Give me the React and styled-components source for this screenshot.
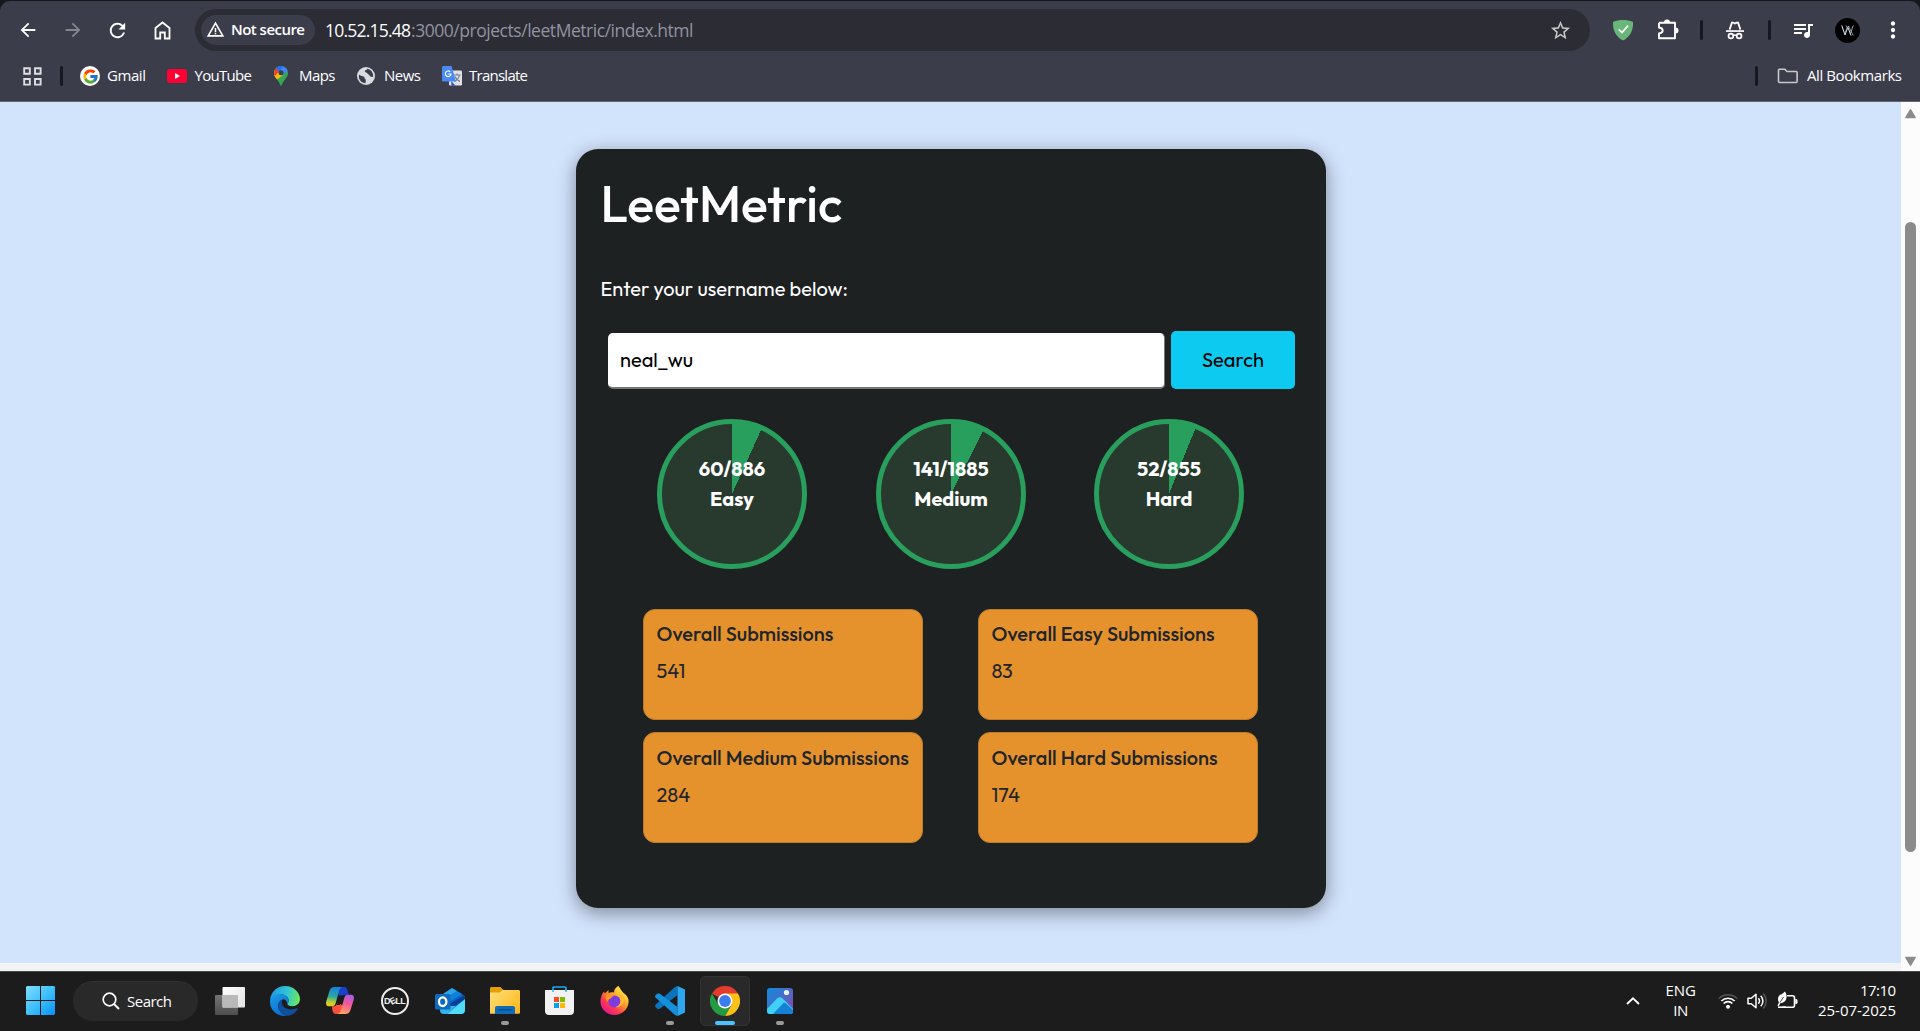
import React, { useLayoutEffect, useRef, useState } from "react";
import styled, { createGlobalStyle } from "styled-components";
import {
  MdArrowBack, MdArrowForward, MdRefresh, MdWarningAmber,
  MdStarBorder, MdQueueMusic, MdMoreVert,
} from "react-icons/md";
import { FcGoogle } from "react-icons/fc";

const UI = `"Segoe UI", "Open Sans", "Noto Sans", sans-serif`;
const PAGE = `Outfit, Lato, "Open Sans", sans-serif`;

const GlobalStyle = createGlobalStyle`
  *, *::before, *::after { box-sizing: border-box; }
  body { margin: 0; background: #16171d; overflow: hidden; }
  h1, p, h4 { margin: 0; }
`;

const Screen = styled.div`
  display: flex;
  flex-direction: column;
  width: 1920px;
  height: 1031px;
  overflow: hidden;
`;

const FitBox = styled.span`
  display: inline-block;
  white-space: nowrap;
`;

/* Tracks the text so that it spans the given width whatever font is installed. */
function Fit({ w, children }) {
  const ref = useRef(null);
  const [spacing, setSpacing] = useState(0);
  useLayoutEffect(() => {
    const natural = ref.current.getBoundingClientRect().width;
    setSpacing((w - natural) / (String(children).length - 1));
  }, [w, children]);
  return (
    <FitBox ref={ref} style={{ letterSpacing: spacing, marginRight: -spacing }}>
      {children}
    </FitBox>
  );
}

/* ---------- browser chrome ---------- */

const Chrome = styled.header`
  flex: none;
  height: 102px;
  padding-top: 1px;
  font-family: ${UI};
  color: #fff;
`;

const ChromeBody = styled.div`
  height: 101px;
  padding-top: 8px;
  background: #3c3d4b;
  border-radius: 10px 10px 0 0;
  border-bottom: 1px solid #64656f;
`;

const Toolbar = styled.div`
  display: flex;
  align-items: center;
  height: 42px;
  padding-left: 5px;
`;

const Slot = styled.div`
  flex: none;
  width: ${(p) => p.$w || 45}px;
  display: flex;
  align-items: center;
  justify-content: center;
  color: ${(p) => (p.$dim ? "#85868f" : "#fff")};
`;

const AddressBar = styled.div`
  flex: none;
  width: 1395px;
  height: 42px;
  margin: 0 10px;
  padding: 0 18px 0 6px;
  border-radius: 21px;
  background: #2b2c34;
  display: flex;
  align-items: center;
`;

const SecurityChip = styled.div`
  display: flex;
  align-items: center;
  gap: 6px;
  width: 114px;
  height: 30px;
  padding: 0 0 2px 5px;
  border-radius: 15px;
  background: #3c3d4b;
  font-size: 15px;
  font-weight: 600;
  line-height: 20px;
`;

const Url = styled.div`
  flex: 1;
  margin-left: 10px;
  font-size: 17.5px;
  line-height: 24px;
  color: #9293a0;
`;

const Host = styled.span`
  color: #fff;
`;

const Divider = styled.div`
  width: 3px;
  height: 20px;
  border-radius: 2px;
  background: #17181f;
`;

const Avatar = styled.div`
  width: 25px;
  height: 25px;
  border-radius: 50%;
  background: #000;
  display: grid;
  place-items: center;
`;

const Bookmarks = styled.nav`
  display: flex;
  align-items: center;
  height: 50px;
  padding: 0 18px 0 23px;
  font-size: 15px;
  line-height: 20px;
`;

const Bookmark = styled.div`
  display: flex;
  align-items: center;
  gap: ${(p) => p.$gap}px;
  margin-left: ${(p) => p.$ml}px;
`;

const BookmarkName = styled.div`
  height: 22px;
`;

const BarStart = styled.div`
  display: flex;
  align-items: center;
  gap: 17.500px;
`;

const BarEnd = styled.div`
  display: flex;
  align-items: center;
  margin-left: auto;
`;

/* ---------- page ---------- */

const Viewport = styled.div`
  display: flex;
  flex: none;
  height: 869px;
`;

const PageColumn = styled.div`
  width: 1901px;
  background: #f1f3f4;
`;

const Page = styled.main`
  height: 861px;
  padding-top: 47px;
  background: #d2e3fc;
  font-family: ${PAGE};
`;

const Scrollbar = styled.div`
  width: 19px;
  background: #fcfcfc;
  display: flex;
  flex-direction: column;
  align-items: center;
  padding-top: 6px;
`;

const Thumb = styled.div`
  flex: none;
  width: 11px;
  height: 630px;
  margin: 103px 1px 104px 0;
  border-radius: 6px;
  background: #8b8b8b;
`;

const Card = styled.section`
  width: 750px;
  height: 759px;
  margin: 0 auto;
  padding: 25px 25px;
  border-radius: 22px;
  background: #1e2122;
  box-shadow: 0 5px 19px rgba(0, 0, 0, 0.4);
  color: #fff;
`;

const Title = styled.h1`
  font-size: 50px;
  font-weight: 500;
  line-height: 60px;
`;

const Hint = styled.p`
  margin-top: 40px;
  font-size: 20px;
  line-height: 30px;
`;

const SearchRow = styled.div`
  display: flex;
  align-items: flex-end;
  gap: 6px;
  margin-top: 27px;
  padding-left: 7px;
  height: 58px;
  font-size: 20px;
  line-height: 30px;
  color: #000;
`;

const Field = styled.div`
  display: flex;
  align-items: center;
  width: 557px;
  height: 56px;
  padding: 0 12.500px 1px;
  border-radius: 5px;
  background: #fff;
  border-right: 1px solid #767676;
  border-bottom: 2px solid #767676;
`;

const SearchButton = styled.button`
  width: 124px;
  height: 58px;
  padding: 0 0 0 1px;
  border: 0;
  border-radius: 5px;
  background: #0dcaf0;
  color: #000;
  font: inherit;
`;

const Rings = styled.div`
  display: grid;
  grid-template-columns: 219px 218px 150px;
  margin: 30px 0 0 56px;
`;

const Ring = styled.div`
  width: 150px;
  height: 150px;
  padding: 30px 0 0 1px;
  border: 5px solid #299f5d;
  border-radius: 50%;
  background: conic-gradient(#299f5d ${(p) => p.$pct}%, #283a2e 0) border-box;
  text-align: center;
  font-size: 20px;
  font-weight: 700;
  line-height: 30px;
`;

const Stats = styled.div`
  display: grid;
  grid-template-columns: 280px 280px;
  gap: 12.400px 55px;
  margin: 40px 0 0 42px;
`;

const Stat = styled.div`
  height: 111px;
  padding: 9px 13px;
  border: 1px solid #bd7c2b;
  border-radius: 12px;
  background: #e5922d;
  color: #212529;
  font-size: 20px;
  line-height: 30px;
  white-space: nowrap;

  &:nth-child(n + 3) {
    padding-top: 10px;
  }
`;

const StatName = styled.h4`
  font-size: inherit;
  font-weight: 500;
`;

const StatValue = styled.p`
  margin-top: 7px;
`;

/* ---------- taskbar ---------- */

const Taskbar = styled.footer`
  display: flex;
  align-items: center;
  flex: none;
  height: 60px;
  padding: 0 24px 2px 26px;
  border-top: 1px solid #48494b;
  background: #1c1c1c;
  color: #fff;
  font-family: ${UI};
  font-size: 15px;
  line-height: 20px;
`;

const SearchPill = styled.div`
  display: flex;
  align-items: center;
  gap: 7px;
  width: 125px;
  height: 40px;
  margin: 0 4px 0 18px;
  padding-left: 29px;
  border-radius: 20px;
  background: #292929;
  border-top: 1px solid #323232;
`;

const AppButton = styled.div`
  position: relative;
  width: 55px;
  height: 50px;
  display: grid;
  place-items: center;
`;

const ActiveTile = styled.div`
  width: 50px;
  height: 50px;
  border: 1px solid #333;
  border-radius: 5px;
  background: #292929;
  display: grid;
  place-items: center;
`;

const Indicator = styled.div`
  position: absolute;
  left: 50%;
  bottom: 1px;
  width: ${(p) => (p.$active ? 20 : 8)}px;
  height: 4px;
  border-radius: 2px;
  background: ${(p) => (p.$active ? "#4cc2ff" : "#9a9a9a")};
  transform: translateX(-50%);
`;

const Tray = styled.div`
  display: flex;
  align-items: center;
  margin-left: auto;
`;

const Language = styled.div`
  display: flex;
  flex-direction: column;
  align-items: center;
  margin: -1px 22px 0 26px;
`;

const Status = styled.div`
  display: flex;
  align-items: center;
  gap: 9px;
`;

const Clock = styled.div`
  display: flex;
  flex-direction: column;
  align-items: flex-end;
  margin: -2px 0 0 20px;
`;

/* ---------- drawings ---------- */

const Block = styled.svg`
  display: block;
  flex: none;
`;
const Svg = ({ w, h = w, box, children, ...rest }) => (
  <Block width={w} height={h} viewBox={box || `0 0 ${w} ${h}`} fill="none" {...rest}>{children}</Block>
);

const Home = () => (
  <Svg w={17} h={19} stroke="#fff" strokeWidth="1.800">
    <path d="M1.500 7L8.500 1.500l7 5.500v10.500h-4.700v-6H6.200v6H1.500z" />
  </Svg>
);
const Shield = () => (
  <Svg w={22} h={22}>
    <path d="M1 3C4 1.6 7.5 1 11 1s7 .6 10 2c.4 8-2.500 14.500-10 18.500C3.500 17.500.6 11 1 3z" fill="#68b678" />
    <path d="M6.800 10.300l3.200 3.300 6-7" stroke="#fff" strokeWidth="1.700" />
  </Svg>
);
const Puzzle = () => (
  <Svg w={22} h={22}>
    <path d="M2 3.800h16v6.400M18 12.500v6.700H2v-4.700c3-.5 3.700-1.700 3.700-3S5 9 2 8.500V3.800M18 3.800V19.200" stroke="#fff" strokeWidth="1.900" strokeLinejoin="round" />
    <path d="M7 3.500a3 3 0 0 1 6 0zM18.500 8.500a3 3 0 0 1 0 6z" fill="#fff" />
  </Svg>
);
const Incognito = () => (
  <Svg w={20} h={20}>
    <path d="M1 10.200h18v1.700H1z" fill="#fff" />
    <path d="M4.600 9.600L6.900 2.700h1.500l1.600.8 1.600-.8h1.500l2.300 6.900" stroke="#fff" strokeWidth="1.800" fill="none" />
    <circle cx="5.900" cy="16" r="2.400" stroke="#fff" strokeWidth="1.700" fill="none" />
    <circle cx="14.100" cy="16" r="2.400" stroke="#fff" strokeWidth="1.700" fill="none" />
    <path d="M8 15.600q2-1.300 4 0" stroke="#fff" strokeWidth="1.400" fill="none" />
  </Svg>
);
const AvatarMark = () => (
  <Svg w={13} h={13}>
    <path d="M.8 1.500l3.200 9.500L6.800 3.200 10 11.500" stroke="#e3e8ec" strokeWidth="1" />
    <path d="M5.200 1.500l1.600 4M3.500 9.500L7.500 2l4.700 9.500M9.500 9l2.800-7.500" stroke="#9fb0c0" strokeWidth=".9" />
  </Svg>
);
const AppsGrid = () => (
  <Svg w={19} h={19} stroke="#dedee3" strokeWidth="1.900">
    <path d="M1.200 1.200h5.600v5.600H1.200zM12 1.200h5.600v5.600H12zM1.200 12h5.600v5.600H1.200zM12 12h5.600v5.600H12z" />
  </Svg>
);
const Google = styled.div`
  width: 20px;
  height: 20px;
  border-radius: 50%;
  background: #fff;
  display: grid;
  place-items: center;
`;
const YouTube = () => (
  <Svg w={20} h={14}>
    <rect width="20" height="14" rx="3.200" fill="#ff0033" />
    <path d="M8 4v6l5-3z" fill="#fff" />
  </Svg>
);
const MapsPin = () => (
  <Svg w={14} h={20}>
    <defs><clipPath id="pin"><path d="M7 0a7 7 0 0 1 7 7c0 3-1.500 4.500-3.600 7.200C8.600 16.700 8 18 7.600 19.300c-.2.900-1 .9-1.200 0C6 18 5.400 16.700 3.600 14.200 1.500 11.500 0 10 0 7a7 7 0 0 1 7-7z" /></clipPath></defs>
    <g clipPath="url(#pin)">
      <path d="M0 0h14v20H0z" fill="#34a853" />
      <path d="M0 4l4 1 5 4-6.500 5L0 13z" fill="#fbbc04" />
      <path d="M0 0h5l2 3-5.500 6.500L0 9z" fill="#ea4335" />
      <path d="M2 1.800L4 0h10v4.500L9.500 9 7 4 4.800 5.200z" fill="#4285f4" />
      <path d="M2 1.800L5 0h5l-5.200 5.200z" fill="#1a73e8" />
    </g>
    <circle cx="7" cy="6.800" r="2.500" fill="#3c3d4b" />
  </Svg>
);
const Globe = () => (
  <Svg w={18} h={18}>
    <circle cx="9" cy="9" r="9" fill="#dadce0" />
    <path d="M2 7.500c1 1.200 3 1.500 4.600 2 1.500.6.400 1.800 1.700 2.500 1 .7.200 2.600.2 4.200C4.500 16 1.800 13 1.800 9zM10.500 1.800c-.7 1.500-2.500 1-2.700 2.800-.1 1.200 1.600.5 2.200 1.500.6 1.300 2 1.200 2.500 2.400.3.900 2 1.600 3.600 1.400.5-4-2-7.300-5.600-8.100z" fill="#3c3d4b" />
  </Svg>
);
const Translate = () => (
  <Svg w={20} h={20}>
    <rect x="7" y="4.500" width="13" height="15" rx="1.200" fill="#dfe1e5" />
    <path d="M9 15l4.500 4.500L9.500 20z" fill="#3b4ed8" />
    <path d="M11.500 9h7M15 7.500V9M17.500 9c-.5 3-2.500 5-5 6.500M13 10.500c.8 2 2.800 4 5 5" stroke="#6b7f87" strokeWidth="1.100" />
    <path d="M1.300 0h8.200L14 15.500H1.300A1.300 1.300 0 0 1 0 14.200V1.300C0 .6.600 0 1.300 0z" fill="#4a8af4" />
    <path d="M8.200 5.800A2.800 2.800 0 1 0 9 8H6.300" stroke="#fff" strokeWidth="1.200" />
  </Svg>
);
const Folder = () => (
  <Svg w={22} h={16}>
    <path d="M2.500 1.200h5.300l2.300 2.300h9c.6 0 1 .5 1 1v9c0 .6-.4 1-1 1H2.500c-.6 0-1-.4-1-1V2.200c0-.6.4-1 1-1z" stroke="#c9c9cd" strokeWidth="1.600" />
  </Svg>
);
const Arrow = ({ down }) => (
  <Svg w={13} h={11}>
    <path d={down ? "M2 1.500h9L6.500 9z" : "M2 9.500h9L6.500 2z"} fill="#8b8b8b" stroke="#8b8b8b" strokeWidth="1.600" strokeLinejoin="round" />
  </Svg>
);

const Windows = () => (
  <Svg w={29}>
    <defs><linearGradient id="win" x1="0" y1="0" x2="29" y2="29" gradientUnits="userSpaceOnUse"><stop stopColor="#7fdcff" /><stop offset=".5" stopColor="#3fc1fb" /><stop offset="1" stopColor="#0a8ff5" /></linearGradient></defs>
    <path d="M1 0h13v14H0V1zM15 0h13l1 1v13H15zM0 15h14v14H1l-1-1zM15 15h14v13l-1 1H15z" fill="url(#win)" />
  </Svg>
);
const Magnifier = () => (
  <Svg w={18}>
    <circle cx="7.500" cy="7.500" r="6.300" stroke="#fff" strokeWidth="1.700" />
    <path d="M12 12l5 5" stroke="#fff" strokeWidth="2" />
  </Svg>
);
const TaskView = () => (
  <Svg w={30} h={28}>
    <defs>
      <linearGradient id="tv1" x1="8" y1="0" x2="30" y2="20" gradientUnits="userSpaceOnUse"><stop stopColor="#fff" /><stop offset="1" stopColor="#e2e2e2" /></linearGradient>
      <linearGradient id="tv2" x1="0" y1="8" x2="0" y2="28" gradientUnits="userSpaceOnUse"><stop stopColor="#747474" /><stop offset="1" stopColor="#4e4e4e" /></linearGradient>
    </defs>
    <rect x="0" y="8" width="23" height="20" rx="1" fill="url(#tv2)" />
    <rect x="7.500" y="0" width="22.500" height="20.500" rx="1" fill="url(#tv1)" />
    <path d="M7.500 8H23v12.500H7.500z" fill="#b9b9b9" />
  </Svg>
);
const Edge = () => (
  <Svg w={30}>
    <defs>
      <linearGradient id="ed1" x1="2" y1="8" x2="30" y2="14" gradientUnits="userSpaceOnUse"><stop stopColor="#209fe0" /><stop offset=".5" stopColor="#2fc4d4" /><stop offset="1" stopColor="#6fec52" /></linearGradient>
      <linearGradient id="ed2" x1="0" y1="10" x2="12" y2="30" gradientUnits="userSpaceOnUse"><stop stopColor="#1a9be6" /><stop offset="1" stopColor="#0b6cd0" /></linearGradient>
    </defs>
    <path d="M15 0c8.500 0 15 6.300 15 13 0 4.500-3.600 7.200-7.400 7.200-3.300 0-5.200-1-5.200-2.200 0-.9 1.300-1.400 1.300-3.500 0-3.500-3.400-6-7.800-6C5.500 8.500 1.300 11.600.1 14 .8 6 7 0 15 0z" fill="url(#ed1)" />
    <path d="M.1 14C1.300 10 5.500 8 9.800 8c4.600 0 9 2.800 9 6.500 0 2.100-1.300 2.600-1.300 3.500-.6-3.500-3-5-5-4.600C8 15 7 20 9.500 24.500c2 3.300 5 5 7.500 5.300C7 30.800-1 23.500.1 14z" fill="url(#ed2)" />
    <path d="M12.500 13.400C8 15 7 20 9.500 24.500c2 3.500 5.500 5.300 8.500 5.200 4-.5 8-3.300 9.700-6.700.3-.7-.2-1-.8-.7-6 2.700-14.200.5-15-4.800-.2-1.700 0-3 .6-4.100z" fill="#0f4f9e" />
  </Svg>
);
const Copilot = () => (
  <Svg w={28} h={27}>
    <defs>
      <linearGradient id="co1" x1="8" y1="0" x2="5" y2="19" gradientUnits="userSpaceOnUse"><stop stopColor="#1583e0" /><stop offset=".5" stopColor="#2aa7a0" /><stop offset=".8" stopColor="#b9cf32" /><stop offset="1" stopColor="#f4c918" /></linearGradient>
      <linearGradient id="co2" x1="24" y1="7" x2="17" y2="27" gradientUnits="userSpaceOnUse"><stop stopColor="#a55cf0" /><stop offset=".5" stopColor="#f05a94" /><stop offset="1" stopColor="#ffa560" /></linearGradient>
    </defs>
    <path d="M14 0h4.500c1.700 0 2.400 1 3 3l1.300 5H18c-2 0-3 1-3.600 3L11 4z" fill="#1a3fc9" />
    <path d="M6 27h7c2 0 3-1.500 3.500-3.300L17 19l-5-4-1.500 3c-.7 1-1.500 1.300-3 1.300H6C6 22 6.500 27 10 27z" fill="#f9503d" />
    <path d="M8.500 0h8c-2 .3-2.800 2-3.400 4L9.700 16c-.7 2.200-1.500 3.300-3.700 3.300H3c-2.500 0-3.500-2-2.700-5L3.500 4C4.300 1.300 5.800 0 8.500 0z" fill="url(#co1)" />
    <path d="M19.500 27h-8c2-.3 2.800-2 3.400-4l3.400-12c.7-2.200 1.500-3.300 3.700-3.300h3c2.500 0 3.500 2 2.700 5L24.500 23c-.8 2.700-2.300 4-5 4z" fill="url(#co2)" />
    <path d="M13.500 8.500h3L13.800 18h-3z" fill="#1c1c1c" />
  </Svg>
);
const DellFace = styled.div`
  width: 28px;
  height: 28px;
  border: 2px solid #eee;
  border-radius: 50%;
  display: flex;
  align-items: center;
  justify-content: center;
  font: 700 9px/10px "Liberation Sans", sans-serif;
  letter-spacing: -0.6px;
  color: #f0f0f0;
`;
const DellE = styled.span`
  transform: rotate(-30deg);
`;
const Outlook = () => (
  <Svg w={30} h={26}>
    <path d="M17 0l12 7.500c.7.500 1 1 1 2V22c0 2.500-1.500 4-4 4H9c-2.500 0-4-1.500-4-4V8z" fill="#0a63c9" />
    <path d="M5 8L17 0l5 3L6 13z" fill="#2aa5ea" />
    <path d="M22 3l5 3L9 17l-4-3z" fill="#1180dc" />
    <path d="M29 7.500l1 2V12L14 21v-5z" fill="#073f94" />
    <path d="M30 11L12 26h14c2.500 0 4-1.500 4-4z" fill="#50dcf7" />
    <path d="M5 18l16 0L12 26H9c-2.500 0-4-1.500-4-4z" fill="#2fb4ee" />
    <rect y="6" width="15.500" height="15.500" rx="1.500" fill="#0f6cbd" />
    <ellipse cx="7.700" cy="13.700" rx="3.700" ry="4.300" stroke="#fff" strokeWidth="2.300" />
  </Svg>
);
const Explorer = () => (
  <Svg w={30} h={27}>
    <defs><linearGradient id="ex" x1="0" y1="3" x2="26" y2="27" gradientUnits="userSpaceOnUse"><stop stopColor="#ffe07a" /><stop offset="1" stopColor="#fdb81e" /></linearGradient></defs>
    <path d="M1 0h9.500l3 3H13v4H0V1z" fill="#e3a006" />
    <path d="M0 5.500h9.500L13 3h16l1 1v22l-1 .8H0z" fill="url(#ex)" />
    <path d="M5 27v-6c0-1.300.8-2 2-2h16c1.300 0 2 .8 2 2v6z" fill="#0f6cb8" />
    <path d="M8.500 22.800h13" stroke="#0a4a84" strokeWidth="1.300" />
  </Svg>
);
const Store = () => (
  <Svg w={29} h={29}>
    <path d="M8 6V2c0-.7.500-1 1-1h11c.6 0 1 .4 1 1v4" stroke="#1ea6ee" strokeWidth="1.700" />
    <path d="M0 4h29v21c0 2.500-1.500 4-4 4H4c-2.500 0-4-1.500-4-4z" fill="#f1f1f1" />
    <path d="M8 4v2M21 4v2" stroke="#36c5f5" strokeWidth="1.700" />
    <path d="M9 11h5v5H9z" fill="#f25022" /><path d="M15 11h5v5h-5z" fill="#7fba00" />
    <path d="M9 17h5v5H9z" fill="#00a4ef" /><path d="M15 17h5v5h-5z" fill="#ffb900" />
  </Svg>
);
const Firefox = () => (
  <Svg w={29} h={29}>
    <defs>
      <linearGradient id="ff" x1="24" y1="3" x2="5" y2="26" gradientUnits="userSpaceOnUse"><stop stopColor="#fff04a" /><stop offset=".4" stopColor="#ff9a2a" /><stop offset=".7" stopColor="#ff3d4f" /><stop offset="1" stopColor="#e6168b" /></linearGradient>
    </defs>
    <path d="M18.500 0c1.500 2 2 3.500 4.500 6.500 3.500 2.500 6 5.500 5.600 9.500C28 23.500 22 29 14.500 29S.500 23.500.500 15.500c0-4 1.300-7.500 3.500-10l.8 2L8.500 4v3c2-1 3.500-1 5.500-.5C14 3.500 16 1 18.500 0z" fill="url(#ff)" />
    <circle cx="14.500" cy="15.500" r="6" fill="#7b3be0" />
    <path d="M6.500 9c3-.5 5 .5 7 1.200-2 .5-2.500 2.300-4 2.800-1.500.4-2 1.500-1.500 3C5 13 5.500 10.500 6.500 9z" fill="#ff9a1f" />
    <path d="M14 6.500c3 .5 6 3 6.500 7 .5 4-2 7-5.500 7.500 5 1 9-3 9-7.500S19 6.500 14 6.500z" fill="#ffbb2e" />
  </Svg>
);
const Code = () => (
  <Svg w={30} h={30}>
    <path d="M22.500 0v9L4.500 23 2.500 23 .5 21c-.6-.7-.6-1.500 0-2.200L20 1z" fill="#0a74bd" />
    <path d="M22.500 30v-9L4.500 7.500h-2l-2 1.800c-.6.700-.6 1.500 0 2.200L20 29z" fill="#1590dc" />
    <path d="M22.500 0L30 3.500v23L22.500 30z" fill="#2ea6f0" />
  </Svg>
);
const ChromeLogo = () => (
  <Svg w={30} h={30}>
    <path d="M15 15L2 7.500A15 15 0 0 1 28 7.500z" fill="#e33b2e" />
    <path d="M15 7.500h13A15 15 0 0 1 15 30l6.500-11.300z" fill="#fbc116" />
    <path d="M2 7.500A15 15 0 0 0 15 30l6.500-11.300L15 15 8.500 18.700z" fill="#249a41" />
    <circle cx="15" cy="15" r="7.500" fill="#fff" />
    <circle cx="15" cy="15" r="5.900" fill="#3b7ded" />
  </Svg>
);
const Photos = () => (
  <Svg w={26} h={26}>
    <defs>
      <linearGradient id="ph" x1="3" y1="0" x2="26" y2="20" gradientUnits="userSpaceOnUse"><stop stopColor="#1488dc" /><stop offset="1" stopColor="#7b4fb5" /></linearGradient>
      <clipPath id="phc"><rect width="26" height="26" rx="3" /></clipPath>
    </defs>
    <g clipPath="url(#phc)">
      <path d="M0 0h26v26H0z" fill="url(#ph)" />
      <path d="M0 21L10 10.500c1.700-1.800 4-1.800 5.700 0L26 21v5H0z" fill="#3fd0f5" />
      <path d="M6 26L16 15.500c1-1 2-1 3 0L26 22v4z" fill="#1480d8" />
    </g>
    <circle cx="19.500" cy="4.500" r="2.600" fill="#eef2fb" />
  </Svg>
);
const Wifi = () => (
  <Svg w={20} h={16}>
    <path d="M.8 5.500a13 13 0 0 1 18.400 0" stroke="#555" strokeWidth="1.400" />
    <path d="M3.300 8a9.500 9.500 0 0 1 13.400 0M5.600 10.500a6.200 6.200 0 0 1 8.800 0" stroke="#fff" strokeWidth="1.600" />
    <circle cx="10" cy="13.700" r="2" fill="#fff" />
  </Svg>
);
const Volume = () => (
  <Svg w={21} h={18}>
    <path d="M1 6.300h3.300L9 2.200v13.600l-4.700-4.100H1z" stroke="#fff" strokeWidth="1.500" strokeLinejoin="round" />
    <path d="M11.300 6.300a4 4 0 0 1 0 5.400M13.700 3.700a7.500 7.500 0 0 1 0 10.600" stroke="#fff" strokeWidth="1.500" />
    <path d="M16.200 1.500a11 11 0 0 1 0 15" stroke="#555" strokeWidth="1.400" />
  </Svg>
);
const Battery = () => (
  <Svg w={21} h={19}>
    <path d="M10 4.800h5.500a2 2 0 0 1 2 2v7.400a2 2 0 0 1-2 2H5" stroke="#fff" strokeWidth="1.600" />
    <path d="M18.300 8h1.200l1 1v3l-1 1h-1.200z" fill="#fff" />
    <path d="M8 .5c2 3 2.200 6.500.5 9C7 11.500 5 12 3.500 12L1.500 15.500.5 14.500l1.500-3C0 8 1 4 5 3z" fill="#fff" />
    <path d="M3 11.500L6.500 6" stroke="#1c1c1c" strokeWidth=".8" />
    <path d="M1 16.200h8" stroke="#fff" strokeWidth="1.600" />
  </Svg>
);
const Chevron = () => (
  <Svg w={14} h={8}><path d="M1 7l6-5.600L13 7" stroke="#fff" strokeWidth="1.900" /></Svg>
);

const BOOKMARKS = [
  { name: "YouTube", w: 57.5, ml: 21, gap: 7.5, icon: <YouTube /> },
  { name: "Maps", w: 36.5, ml: 22, gap: 11, icon: <MapsPin /> },
  { name: "News", w: 37, ml: 21.5, gap: 9, icon: <Globe /> },
  { name: "Translate", w: 59, ml: 20.5, gap: 7.5, icon: <Translate /> },
];

const LEVELS = [
  { name: "Easy", solved: 60, total: 886 },
  { name: "Medium", solved: 141, total: 1885 },
  { name: "Hard", solved: 52, total: 855 },
];

const STATS = [
  { name: "Overall Submissions", value: 541 },
  { name: "Overall Easy Submissions", value: 83 },
  { name: "Overall Medium Submissions", value: 284 },
  { name: "Overall Hard Submissions", value: 174 },
];

const APPS = [
  { id: "taskview", icon: <TaskView /> },
  { id: "edge", icon: <Edge /> },
  { id: "copilot", icon: <Copilot /> },
  { id: "dell", icon: <DellFace>D<DellE>E</DellE>LL</DellFace> },
  { id: "outlook", icon: <Outlook /> },
  { id: "explorer", icon: <Explorer />, open: true },
  { id: "store", icon: <Store /> },
  { id: "firefox", icon: <Firefox /> },
  { id: "code", icon: <Code />, open: true },
  { id: "chrome", icon: <ChromeLogo />, active: true },
  { id: "photos", icon: <Photos />, open: true },
];

export default function App() {
  return (
    <Screen>
      <GlobalStyle />
      <Chrome>
        <ChromeBody>
          <Toolbar>
            <Slot><MdArrowBack size={22} /></Slot>
            <Slot $dim><MdArrowForward size={22} /></Slot>
            <Slot><MdRefresh size={23} /></Slot>
            <Slot><Home /></Slot>
            <AddressBar>
              <SecurityChip>
                <MdWarningAmber size={19} />
                <Fit w={74}>Not secure</Fit>
              </SecurityChip>
              <Url><Host><Fit w={86}>10.52.15.48</Fit></Host><Fit w={282.5}>:3000/projects/leetMetric/index.html</Fit></Url>
              <MdStarBorder size={23} color="#c7c7cb" />
            </AddressBar>
            <Slot><Shield /></Slot>
            <Slot $w={46}><Puzzle /></Slot>
            <Slot $w={20}><Divider /></Slot>
            <Slot $w={48}><Incognito /></Slot>
            <Slot $w={20}><Divider /></Slot>
            <Slot $w={48}><MdQueueMusic size={24} /></Slot>
            <Slot $w={41}><Avatar><AvatarMark /></Avatar></Slot>
            <Slot $w={49}><MdMoreVert size={26} /></Slot>
          </Toolbar>
          <Bookmarks>
            <BarStart>
              <AppsGrid />
              <Divider />
              <Bookmark $gap={7}>
                <Google><FcGoogle size={17} /></Google>
                <BookmarkName><Fit w={39}>Gmail</Fit></BookmarkName>
              </Bookmark>
            </BarStart>
            {BOOKMARKS.map((b) => (
              <Bookmark key={b.name} $ml={b.ml} $gap={b.gap}>
                {b.icon}
                <BookmarkName><Fit w={b.w}>{b.name}</Fit></BookmarkName>
              </Bookmark>
            ))}
            <BarEnd>
              <Divider />
              <Bookmark $ml={19} $gap={8}>
                <Folder />
                <BookmarkName><Fit w={95}>All Bookmarks</Fit></BookmarkName>
              </Bookmark>
            </BarEnd>
          </Bookmarks>
        </ChromeBody>
      </Chrome>

      <Viewport>
        <PageColumn>
          <Page>
            <Card>
              <Title>LeetMetric</Title>
              <Hint>Enter your username below:</Hint>
              <SearchRow>
                <Field>neal_wu</Field>
                <SearchButton>Search</SearchButton>
              </SearchRow>
              <Rings>
                {LEVELS.map((l) => (
                  <Ring key={l.name} $pct={(l.solved / l.total) * 100}>
                    <div>{`${l.solved}/${l.total}`}</div>
                    <div>{l.name}</div>
                  </Ring>
                ))}
              </Rings>
              <Stats>
                {STATS.map((s) => (
                  <Stat key={s.name}>
                    <StatName>{s.name}</StatName>
                    <StatValue>{s.value}</StatValue>
                  </Stat>
                ))}
              </Stats>
            </Card>
          </Page>
        </PageColumn>
        <Scrollbar>
          <Arrow />
          <Thumb />
          <Arrow down />
        </Scrollbar>
      </Viewport>

      <Taskbar>
        <Windows />
        <SearchPill>
          <Magnifier />
          <Fit w={45}>Search</Fit>
        </SearchPill>
        {APPS.map((a) => (
          <AppButton key={a.id}>
            {a.active ? <ActiveTile>{a.icon}</ActiveTile> : a.icon}
            {(a.open || a.active) && <Indicator $active={a.active} />}
          </AppButton>
        ))}
        <Tray>
          <Chevron />
          <Language>
            <Fit w={30.5}>ENG</Fit>
            <Fit w={15}>IN</Fit>
          </Language>
          <Status>
            <Wifi />
            <Volume />
            <Battery />
          </Status>
          <Clock>
            <Fit w={36}>17:10</Fit>
            <Fit w={78}>25-07-2025</Fit>
          </Clock>
        </Tray>
      </Taskbar>
    </Screen>
  );
}
